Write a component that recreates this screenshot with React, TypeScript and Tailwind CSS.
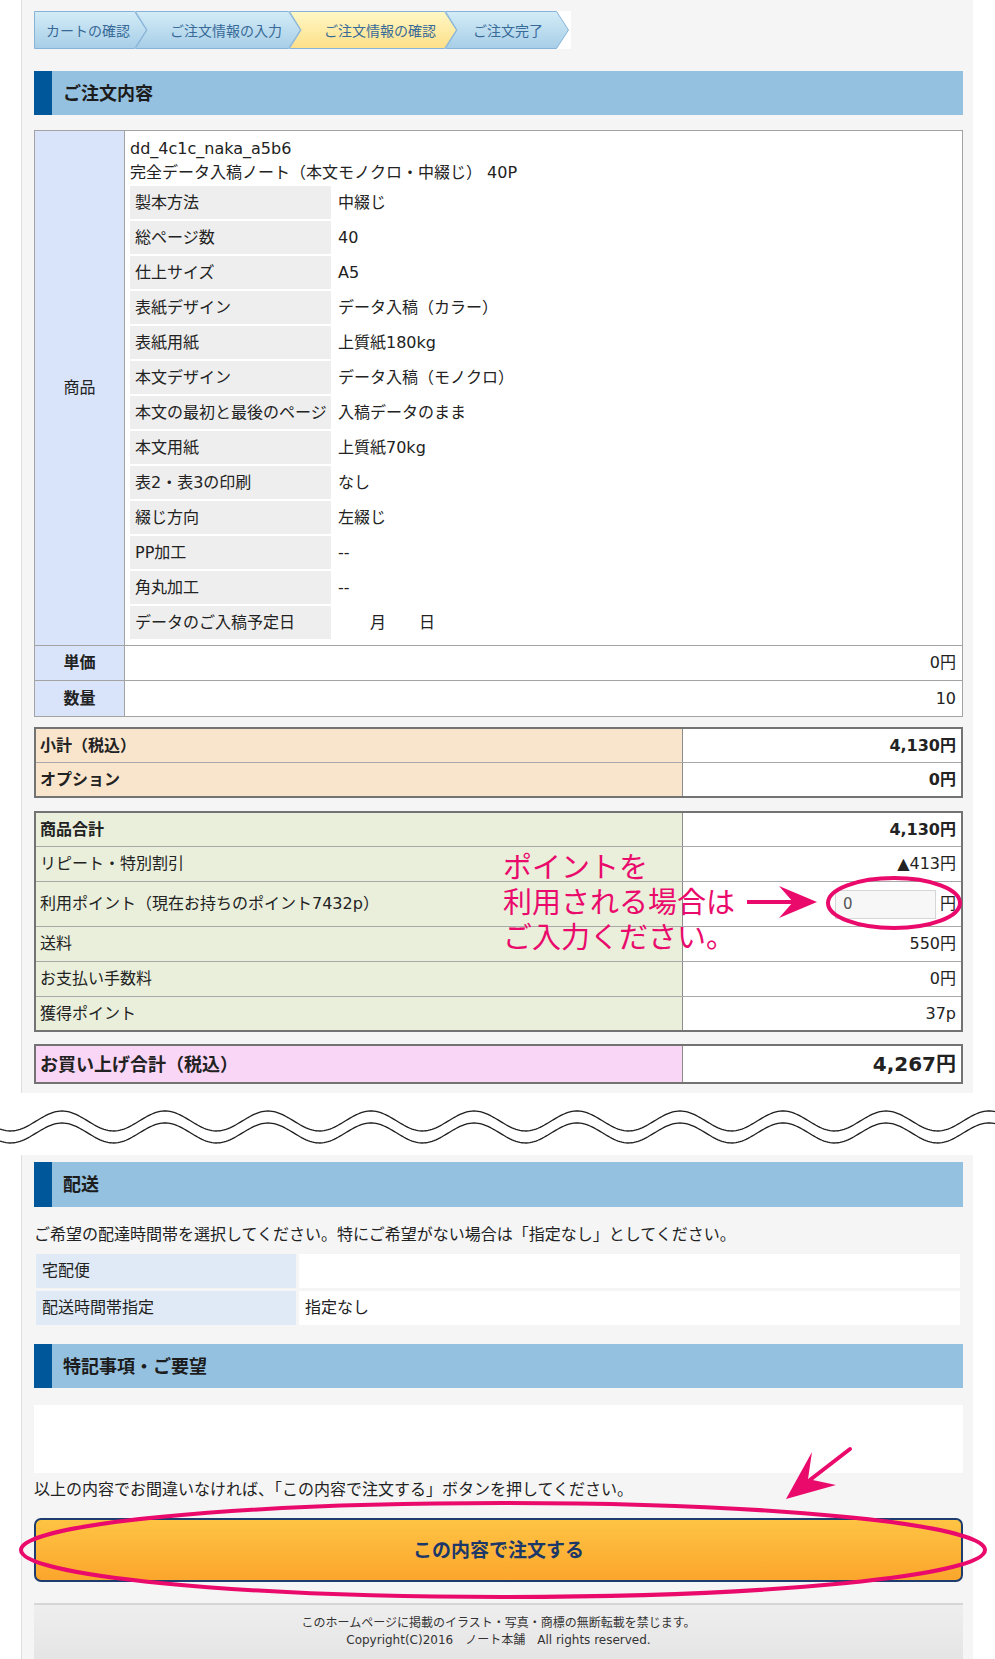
const steps = [
  { label: "カートの確認", w: 113, cls: "w-[113px] pl-[12px]", first: true, active: false },
  { label: "ご注文情報の入力", w: 166, cls: "w-[166px] pl-[35px] -ml-[12px]", first: false, active: false },
  { label: "ご注文情報の確認", w: 168, cls: "w-[168px] pl-[35px] -ml-[12px]", first: false, active: true },
  { label: "ご注文完了", w: 124, cls: "w-[124px] pl-[28px] -ml-[12px]", first: false, active: false },
];

const specs = [
  ["製本方法", "中綴じ"],
  ["総ページ数", "40"],
  ["仕上サイズ", "A5"],
  ["表紙デザイン", "データ入稿（カラー）"],
  ["表紙用紙", "上質紙180kg"],
  ["本文デザイン", "データ入稿（モノクロ）"],
  ["本文の最初と最後のページ", "入稿データのまま"],
  ["本文用紙", "上質紙70kg"],
  ["表2・表3の印刷", "なし"],
  ["綴じ方向", "左綴じ"],
  ["PP加工", "--"],
  ["角丸加工", "--"],
];

function Breadcrumb() {
  return (
    <div className="flex w-[537px] bg-white font-['Noto_Sans_CJK_JP',sans-serif]">
      {steps.map((s, i) => {
        const w = s.w;
        const pts = s.first
          ? `0.5,0.5 ${w - 12.5},0.5 ${w - 0.5},19 ${w - 12.5},37.5 0.5,37.5`
          : `0.5,0.5 ${w - 12.5},0.5 ${w - 0.5},19 ${w - 12.5},37.5 0.5,37.5 12,19`;
        return (
          <div key={s.label} className={`relative flex h-[38px] items-center ${s.cls}`}>
            <svg className="absolute inset-0" width={w} height={38}>
              <defs>
                <linearGradient id={`bc${i}`} x1="0" y1="0" x2="0" y2="1">
                  <stop offset="0" stopColor={s.active ? "#fff8c6" : "#d3ecf7"} />
                  <stop offset="1" stopColor={s.active ? "#fddf88" : "#a7cee7"} />
                </linearGradient>
              </defs>
              <polygon points={pts} fill={`url(#bc${i})`} stroke="#86b3d7" strokeWidth="1" />
            </svg>
            <span className="relative text-[14px] text-[#386a98]">{s.label}</span>
          </div>
        );
      })}
    </div>
  );
}

function SectionHeader({ title }: { title: string }) {
  return (
    <div className="flex h-[44px] items-center bg-[#94c1e0]">
      <div className="h-full w-[18px] bg-[#00589b]" />
      <h2 className="ml-[11px] text-[18px] font-bold text-[#1c1c1c]">{title}</h2>
    </div>
  );
}

type Row = { label: string; value: React.ReactNode; bold?: boolean; h: string };

function SummaryTable({ rows, bg, className }: { rows: Row[]; bg: string; className: string }) {
  return (
    <div className={`border-2 border-[#737373] bg-white ${className}`}>
      {rows.map((r, i) => (
        <div key={r.label} className={`flex ${r.h} ${i > 0 ? "border-t border-[#a8a8a8]" : ""}`}>
          <div className={`flex w-[647px] items-center border-r border-[#8c8c8c] pl-[4px] text-[16px] ${bg} ${r.bold ? "font-bold" : ""}`}>
            {r.label}
          </div>
          <div className={`flex flex-1 items-center justify-end pr-[5px] text-[16px] ${r.bold ? "font-bold" : ""}`}>
            {r.value}
          </div>
        </div>
      ))}
    </div>
  );
}

function Wave() {
  const line = (c: number) => {
    const pts: string[] = [];
    for (let x = 0; x <= 996; x += 2) {
      const y = c - 10 * Math.cos((2 * Math.PI * (x - 62)) / 103);
      pts.push(`${x},${y.toFixed(2)}`);
    }
    return "M" + pts.join(" L");
  };
  return (
    <svg width={995} height={62} className="block">
      <path d={line(28)} fill="none" stroke="#1e1e1e" strokeWidth="1.3" />
      <path d={line(40)} fill="none" stroke="#1e1e1e" strokeWidth="1.3" />
    </svg>
  );
}

function Annotations() {
  const pink = "#ea0a6c";
  return (
    <div className="pointer-events-none absolute left-0 top-0 h-[1659px] w-[995px]">
      <svg width={995} height={1659} className="absolute inset-0">
        <line x1="747" y1="902" x2="800" y2="902" stroke={pink} strokeWidth="4" />
        <polygon points="817,902 779,886 793,902 779,918" fill={pink} />
        <ellipse cx="894" cy="903" rx="66" ry="25" fill="none" stroke={pink} strokeWidth="4" />
        <ellipse cx="503" cy="1550" rx="482" ry="47" fill="none" stroke={pink} strokeWidth="4" />
        <line x1="850" y1="1449" x2="806" y2="1483" stroke={pink} strokeWidth="4" strokeLinecap="round" />
        <polygon points="786,1499 812,1452 808,1479 836,1485" fill={pink} />
      </svg>
      <div className="absolute left-[503px] top-[848px] font-['Noto_Sans_CJK_JP',sans-serif] text-[29px] leading-[35px] text-[#ea0a6c]">
        <p>ポイントを</p>
        <p>利用される場合は</p>
        <p>ご入力ください。</p>
      </div>
    </div>
  );
}

export default function App() {
  return (
    <div className="relative w-[995px] bg-white font-['DejaVu_Sans','Noto_Sans_CJK_JP',sans-serif] text-[#222]">
      <div className="ml-[21px] w-[952px] border-l border-[#dedede] bg-[#f5f5f5] pl-[12px] pr-[10px] pt-[11px] pb-[9px]">
        <Breadcrumb />
        <div className="mt-[22px]">
          <SectionHeader title="ご注文内容" />
        </div>

        <div className="mt-[15px] border border-[#a3a3a3] bg-white">
          <div className="flex">
            <div className="flex w-[90px] items-center justify-center border-r border-[#a3a3a3] bg-[#d9e4fb] text-[16px]">
              商品
            </div>
            <div className="flex-1 px-[5px] pt-[6px] pb-[6px] text-[16px]">
              <p className="leading-[24px]">dd_4c1c_naka_a5b6</p>
              <p className="leading-[24px]">完全データ入稿ノート（本文モノクロ・中綴じ） 40P</p>
              <div className="mt-[1px] flex flex-col gap-[2px]">
                {specs.map(([k, v]) => (
                  <div key={k} className="flex h-[33px]">
                    <div className="flex w-[201px] items-center bg-[#eeeeee] pl-[5px]">{k}</div>
                    <div className="flex items-center pl-[7px]">{v}</div>
                  </div>
                ))}
                <div className="flex h-[33px]">
                  <div className="flex w-[201px] items-center bg-[#eeeeee] pl-[5px]">データのご入稿予定日</div>
                  <div className="flex items-center pl-[7px]">
                    <span className="ml-[32px]">月</span>
                    <span className="ml-[33px]">日</span>
                  </div>
                </div>
              </div>
            </div>
          </div>
          <div className="flex h-[35px] border-t border-[#a3a3a3]">
            <div className="flex w-[90px] items-center justify-center border-r border-[#a3a3a3] bg-[#d9e4fb] text-[16px] font-bold">
              単価
            </div>
            <div className="flex flex-1 items-center justify-end pr-[6px] text-[16px]">0円</div>
          </div>
          <div className="flex h-[36px] border-t border-[#a3a3a3]">
            <div className="flex w-[90px] items-center justify-center border-r border-[#a3a3a3] bg-[#d9e4fb] text-[16px] font-bold">
              数量
            </div>
            <div className="flex flex-1 items-center justify-end pr-[6px] text-[16px]">10</div>
          </div>
        </div>

        <SummaryTable
          className="mt-[10px]"
          bg="bg-[#f9e5cc]"
          rows={[
            { label: "小計（税込）", value: "4,130円", bold: true, h: "h-[33px]" },
            { label: "オプション", value: "0円", bold: true, h: "h-[34px]" },
          ]}
        />

        <SummaryTable
          className="mt-[13px]"
          bg="bg-[#e9efdb]"
          rows={[
            { label: "商品合計", value: "4,130円", bold: true, h: "h-[33px]" },
            { label: "リピート・特別割引", value: "▲413円", h: "h-[35px]" },
            {
              label: "利用ポイント（現在お持ちのポイント7432p）",
              value: (
                <div className="flex items-center gap-[4px]">
                  <input
                    readOnly
                    value="0"
                    className="h-[29px] w-[101px] border border-[#d6d6d6] bg-[#f7f7f7] pl-[7px] text-[15px] text-[#555] outline-none"
                  />
                  <span>円</span>
                </div>
              ),
              h: "h-[45px]",
            },
            { label: "送料", value: "550円", h: "h-[35px]" },
            { label: "お支払い手数料", value: "0円", h: "h-[35px]" },
            { label: "獲得ポイント", value: "37p", h: "h-[34px]" },
          ]}
        />

        <div className="mt-[12px] flex h-[40px] border-2 border-[#737373] bg-white">
          <div className="flex w-[647px] items-center border-r border-[#8c8c8c] bg-[#fad6f6] pl-[4px] text-[18px] font-bold">
            お買い上げ合計（税込）
          </div>
          <div className="flex flex-1 items-center justify-end pr-[5px] text-[20px] font-bold">4,267円</div>
        </div>
      </div>

      <Wave />

      <div className="ml-[21px] w-[952px] border-l border-[#dedede] bg-[#f5f5f5] pl-[12px] pr-[10px] pt-[7px]">
        <div className="flex h-[45px] items-center bg-[#94c1e0]">
          <div className="h-full w-[18px] bg-[#00589b]" />
          <h2 className="ml-[11px] text-[18px] font-bold text-[#1c1c1c]">配送</h2>
        </div>
        <p className="mt-[16px] text-[16px] leading-[24px]">
          ご希望の配達時間帯を選択してください。特にご希望がない場合は「指定なし」としてください。
        </p>
        <div className="mt-[7px] flex flex-col gap-[3px] pl-[2px] pr-[3px] text-[16px]">
          <div className="flex h-[34px] gap-[3px]">
            <div className="flex w-[260px] items-center bg-[#dfeaf6] pl-[6px]">宅配便</div>
            <div className="flex-1 bg-white" />
          </div>
          <div className="flex h-[34px] gap-[3px]">
            <div className="flex w-[260px] items-center bg-[#dfeaf6] pl-[6px]">配送時間帯指定</div>
            <div className="flex flex-1 items-center bg-white pl-[6px]">指定なし</div>
          </div>
        </div>

        <div className="mt-[19px]">
          <SectionHeader title="特記事項・ご要望" />
        </div>
        <div className="mt-[17px] h-[68px] bg-white" />
        <p className="mt-[5px] text-[16px] leading-[24px]">
          以上の内容でお間違いなければ、「この内容で注文する」ボタンを押してください。
        </p>
        <button className="mt-[16px] flex h-[64px] w-full items-center justify-center rounded-[7px] border-2 border-[#1e3c6e] bg-gradient-to-b from-[#fec443] to-[#fba62c] text-[19px] font-bold text-[#1c3869]">
          この内容で注文する
        </button>
        <footer className="mt-[21px] h-[56px] border-t-2 border-[#d6d6d6] bg-gradient-to-b from-[#efeeee] to-[#e6e5e5] pt-[10px] text-center text-[12px] leading-[17px] text-[#333]">
          <p>このホームページに掲載のイラスト・写真・商標の無断転載を禁じます。</p>
          <p>Copyright(C)2016　ノート本舗　All rights reserved.</p>
        </footer>
      </div>

      <Annotations />
    </div>
  );
}
